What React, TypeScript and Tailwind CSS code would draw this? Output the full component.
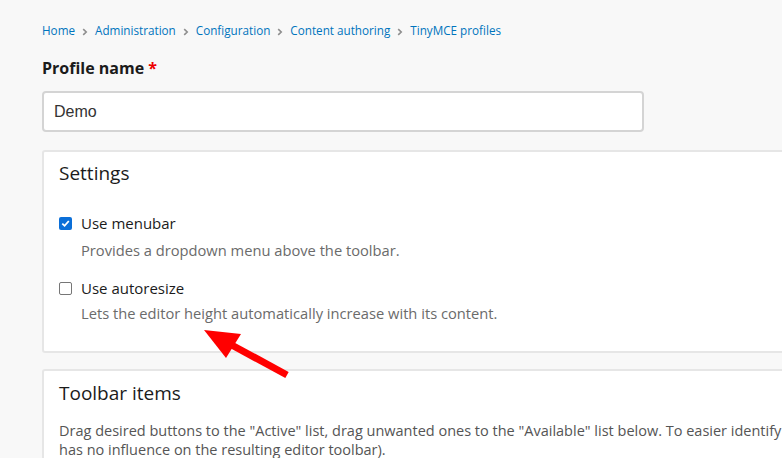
import React from "react";

const Chevron = () => (
  <svg width="6" height="8" viewBox="0 0 6 8" className="mx-[7px] mt-[1px]">
    <path d="M1.2 1.2 L4.2 4 L1.2 6.8" fill="none" stroke="#8e8e8e" strokeWidth="1.6" />
  </svg>
);

export default function App() {
  const crumbs = ["Home", "Administration", "Configuration", "Content authoring", "TinyMCE profiles"];
  return (
    <div className="relative w-[782px] h-[458px] overflow-hidden bg-[#f8f8f8]" style={{ fontFamily: '"Open Sans", sans-serif' }}>
      <div className="pl-[42px] pt-[22px]">
        <nav className="flex items-center text-[11.7px] text-[#0074bd] h-[18px]">
          {crumbs.map((c, i) => (
            <React.Fragment key={c}>
              {i > 0 && <Chevron />}
              <span>{c}</span>
            </React.Fragment>
          ))}
        </nav>
        <div className="mt-[18px] text-[16px] font-bold text-[#1b1b1b] leading-[20px]">
          Profile name <span className="text-[#e00]">*</span>
        </div>
        <div className="mt-[13px] w-[602px] h-[41px] bg-white border-2 border-[#d4d4d4] rounded-[4px] flex items-center pl-[10px] text-[16px] text-[#333]" style={{ fontFamily: '"Liberation Sans", Arial, sans-serif' }}>
          Demo
        </div>
        <div className="mt-[18px] w-[800px] bg-white border-2 border-[#e6e6e6] rounded-[3px] pl-[15px] pt-[7px] pb-[28px]">
          <div className="text-[19px] leading-[28px] text-[#1b1b1b]">Settings</div>
          <div className="mt-[27px] flex items-center h-[18px]">
            <span className="w-[13px] h-[13px] rounded-[2px] bg-[#0b6fd8] flex items-center justify-center">
              <svg width="9" height="9" viewBox="0 0 9 9">
                <path d="M1.3 4.6 L3.6 6.8 L7.8 2" fill="none" stroke="white" strokeWidth="1.8" />
              </svg>
            </span>
            <span className="ml-[9px] text-[15px] text-[#1b1b1b]">Use menubar</span>
          </div>
          <div className="mt-[8px] ml-[22px] text-[14.7px] text-[#6b6b6b] leading-[20px]">Provides a dropdown menu above the toolbar.</div>
          <div className="mt-[19px] flex items-center h-[18px]">
            <span className="w-[13px] h-[13px] rounded-[2px] border border-[#767676] bg-white" />
            <span className="ml-[9px] text-[15px] text-[#1b1b1b]">Use autoresize</span>
          </div>
          <div className="mt-[6px] ml-[22px] text-[14.7px] text-[#6b6b6b] leading-[20px]">Lets the editor height automatically increase with its content.</div>
        </div>
        <div className="mt-[16px] w-[800px] h-[120px] bg-white border-2 border-[#e6e6e6] rounded-[3px] pl-[15px] pt-[8px]">
          <div className="text-[19px] leading-[28px] text-[#1b1b1b]">Toolbar items</div>
          <div className="mt-[14px] text-[14.5px] leading-[19px] text-[#555] whitespace-nowrap">
            Drag desired buttons to the "Active" list, drag unwanted ones to the "Available" list below. To easier identify the buttons
            <br />
            has no influence on the resulting editor toolbar).
          </div>
        </div>
      </div>
      <svg className="absolute left-0 top-0 pointer-events-none" width="782" height="458">
        <line x1="287" y1="375" x2="228" y2="343" stroke="#f00" strokeWidth="7" />
        <polygon points="204,330 241,334 226,358" fill="#f00" />
      </svg>
    </div>
  );
}
